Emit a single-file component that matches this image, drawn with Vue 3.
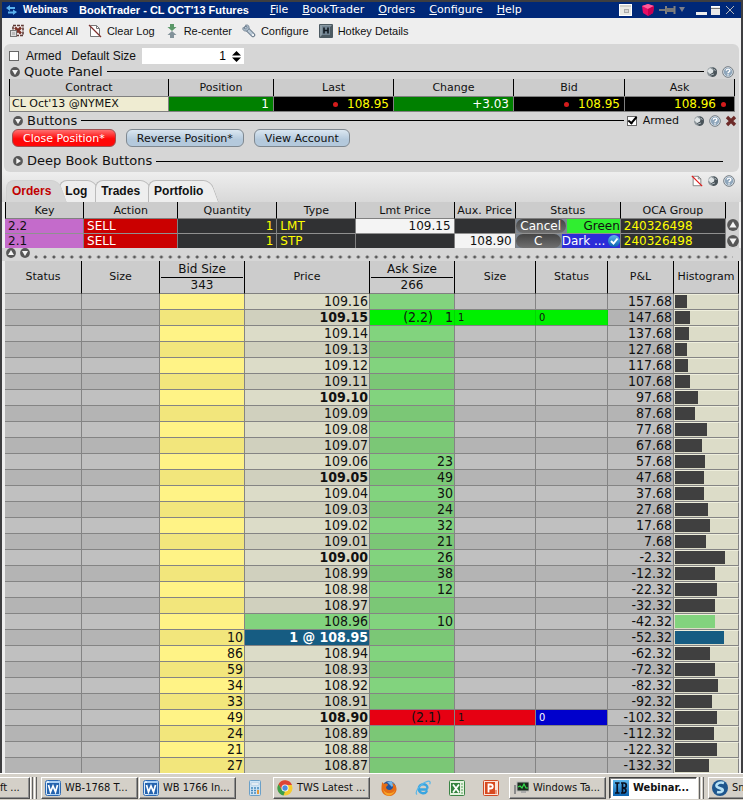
<script setup>
import { ref } from 'vue'

const armed = ref(false)
const buttonsArmed = ref(true)
const defaultSize = ref('1')

const menus = ['File', 'BookTrader', 'Orders', 'Configure', 'Help']
const tabs = ['Orders', 'Log', 'Trades', 'Portfolio']
const activeTab = ref('Orders')

const orders = [
  { key: '2.2', action: 'SELL', qty: 1, type: 'LMT', lmt: '109.15', aux: '', cancel: 'Cancel', state: 'Green', tone: 'working', oca: '240326498' },
  { key: '2.1', action: 'SELL', qty: 1, type: 'STP', lmt: '', aux: '108.90', cancel: 'C', state: 'Dark ...', tone: 'held', oca: '240326498' }
]

const bars = [12, 15, 14, 12, 13, 15, 23, 20, 32, 27, 30, 29, 29, 33, 35, 31, 50, 40, 42, 40, 40, 49, 35, 40, 43, 37, 42, 39, 42, 34]
const askSizes = { 10: 23, 11: 49, 12: 30, 13: 24, 14: 32, 15: 21, 16: 26, 17: 38, 18: 12, 20: 10 }
const bidSizes = { 21: 10, 22: 86, 23: 59, 24: 34, 25: 33, 26: 49, 27: 24, 28: 21, 29: 27 }
const marks = {
  1: { tone: 'limit', tag: '(2.2)', ask: '1', size: '1', status: '0' },
  26: { tone: 'stop', tag: '(2.1)', ask: '', size: '1', status: '0' }
}

const ladder = bars.map((bar, i) => {
  const cents = 10916 - i
  const price = (cents / 100).toFixed(2)
  return {
    price: i === 21 ? '1 @ ' + price : price,
    bold: cents % 5 === 0,
    level: i === 20 ? 'best-ask' : i === 21 ? 'last' : '',
    bid: bidSizes[i] ?? '',
    ask: askSizes[i] ?? '',
    pnl: (157.68 - i * 10).toFixed(2),
    bar: (bar / 63) * 100,
    mark: marks[i]
  }
})
</script>

<template>
  <div class="desktop">
    <svg class="defs" aria-hidden="true">
      <defs>
        <linearGradient id="sky" x1="0" y1="0" x2="0" y2="1"><stop offset="0" stop-color="#5fb8ec" /><stop offset="1" stop-color="#0a62b0" /></linearGradient>
        <symbol id="wrench" viewBox="0 0 12 12">
          <circle cx="6" cy="6" r="5" fill="#8b9499" />
          <path d="M1 5l3-3 3 2v3L4 8z" fill="#dfe4e6" />
          <path d="M6 1.500c2 1 2.500 3 1 5l-3 2 2 2.500c4 0 5-3 5-5 0-3-2-4.500-5-4.500z" fill="#4a545a" />
          <path d="M8 3l1.500 2M5 9l3-1" stroke="#aab4ba" stroke-width="1" />
        </symbol>
        <symbol id="help" viewBox="0 0 12 12">
          <circle cx="6" cy="6" r="5.300" fill="#e6edf3" stroke="#707980" />
          <circle cx="6" cy="6" r="4.200" fill="#8fa6bb" />
          <path d="M4.300 4.700c.2-2.200 3.600-2 3.500 0C7.700 6 6 5.800 6 7.200M6 8.200v1.200" fill="none" stroke="#fff" stroke-width="1.400" />
        </symbol>
        <symbol id="round-down" viewBox="0 0 10 10"><circle cx="5" cy="5" r="4.900" fill="#575757" /><path d="M2 3h6L5 8z" fill="#f4f4f4" /></symbol>
        <symbol id="round-right" viewBox="0 0 10 10"><circle cx="5" cy="5" r="4.900" fill="#575757" /><path d="M3.300 2v6l4.700-3z" fill="#f4f4f4" /></symbol>
        <symbol id="round-up" viewBox="0 0 10 10"><circle cx="5" cy="5" r="4.900" fill="#575757" /><path d="M2 7h6L5 2z" fill="#f4f4f4" /></symbol>
        <symbol id="clear-page" viewBox="0 0 12 14"><path d="M1.500 1.500h6l3 3v8h-9z" fill="#fff" stroke="#777" /><path d="M7.500 1.500v3h3" fill="none" stroke="#777" /></symbol>
        <symbol id="word" viewBox="0 0 16 16">
          <rect x=".5" y=".5" width="15" height="15" rx="2" fill="#dcecfb" stroke="#2d69b3" />
          <path d="M4 1h11v14H5z" fill="#a9cff5" /><rect x="2" y="3" width="12" height="11" fill="#2563ae" />
          <path d="M3.500 5l2 7L8 6l2.500 6 2-7" fill="none" stroke="#fff" stroke-width="1.700" />
        </symbol>
      </defs>
    </svg>

    <main class="window">
      <header class="titlebar">
        <svg class="app-icon" viewBox="0 0 11 11"><path d="M0 3l4-3v2h5v2H4v2zM11 7L7 10V8.500H2v-2h5V4.500z" fill="#5bb2ee" /></svg>
        <span class="group-name">Webinars</span>
        <h1>BookTrader - CL OCT'13 Futures</h1>
        <nav class="menus">
          <button v-for="m in menus" :key="m" type="button"><u>{{ m[0] }}</u>{{ m.slice(1) }}</button>
        </nav>
        <div class="window-tools">
          <svg width="13" height="12" viewBox="0 0 13 12"><rect x=".5" y=".5" width="12" height="11" fill="#e9e9e4" stroke="#fff" /><path d="M1 2h11" stroke="#b6b6b0" /><rect x="5" y="5" width="5" height="4" fill="#aaa" /><path d="M6 7h3" stroke="#fff" /></svg>
          <svg width="12" height="12" viewBox="0 0 12 12"><path d="M0 2l6-2 6 2-1 7-5 3-5-3z" fill="#e80d65" /><path d="M0 2l6-2 6 2-6 3z" fill="#ff5c9b" /><path d="M6 5v7l5-3 1-7z" fill="#c60050" /></svg>
          <svg width="27" height="10" viewBox="0 0 27 10"><path d="M0 5h7" stroke="#777" stroke-width="2" /><path d="M7 1v8M15.500 1v8" stroke="#808080" stroke-width="2" /><path d="M7 3h8v4H7z" fill="#777" /><path d="M20 2h6l-3 5z" fill="#7b7f8c" /></svg>
          <svg class="controls" width="39" height="11" viewBox="0 0 39 11"><path d="M0 7h11v3H0z" fill="#eee" /><path d="M15 1h9v9h-9z" fill="#e8e8e8" /><path d="M15 1.500h9" stroke="#fff" /><path d="M15 3.500h9" stroke="#777" /><path d="M30 1l8 8M38 1l-8 8" stroke="#b8b8b8" stroke-width="1" /></svg>
        </div>
      </header>

      <div class="toolbar">
        <button type="button">
          <svg width="14" height="14" viewBox="0 0 14 14"><path d="M3 1.500h10v10H3z" fill="#f4eeee" stroke="#5d3a35" stroke-width="1.600" stroke-dasharray="3 1" /><path d="M5 3.500l6 6M11 3.500l-6 6" stroke="#7c3328" stroke-width="2.600" /><rect x=".5" y="6.500" width="6" height="6" fill="#ddd" stroke="#777" /><path d="M2 8h3v3H2z" fill="#bbb" /></svg>
          Cancel All
        </button>
        <button type="button">
          <svg width="14" height="14" viewBox="-1 0 14 14"><use href="#clear-page" width="12" height="14" /><path d="M0 1l12 12" stroke="#7f2f2c" stroke-width="1.300" /></svg>
          Clear Log
        </button>
        <button type="button">
          <svg width="14" height="14" viewBox="-2 0 14 14"><path d="M3 0h4v3h2.500L5 7 .5 3H3z" fill="#5b9868" /><path d="M3 14h4v-3h2.500L5 7l-4.500 4H3z" fill="#82929a" /></svg>
          Re-center
        </button>
        <button type="button">
          <svg width="14" height="14" viewBox="0 0 14 14"><path d="M4 4l7 7" stroke="#667787" stroke-width="4.500" stroke-linecap="round" /><path d="M4 4l7 7" stroke="#b9c8d5" stroke-width="2.500" stroke-linecap="round" /><path d="M1 3.500L3.500 5 5 3.500 3.500 1c3-.5 4 1 3.500 4L5 7C2 7.500 0 6 1 3.500z" fill="#a7b8c7" stroke="#718291" stroke-width=".8" /><circle cx="11" cy="11" r="1" fill="#fff" /></svg>
          Configure
        </button>
        <button type="button">
          <svg width="14" height="14" viewBox="0 0 14 14"><rect width="14" height="14" rx="1" fill="#4c5a62" /><path d="M1 1h12l-2 2H3v8l-2 2z" fill="#8a9aa3" /><rect x="3" y="2" width="8" height="9" fill="#718391" /><path d="M5 3.500v6M9 3.500v6M5 6.500h4" stroke="#101820" stroke-width="1.600" /></svg>
          Hotkey Details
        </button>
      </div>

      <section class="panel">
        <div class="defaults">
          <label class="check"><input v-model="armed" type="checkbox" />Armed</label>
          <label for="default-size">Default Size</label>
          <span class="spinner">
            <input id="default-size" v-model="defaultSize" type="text" inputmode="numeric" />
            <button type="button" aria-label="Change size"><svg width="9" height="11" viewBox="0 0 9 11"><path d="M0 4.500L4.500 0 9 4.500zM0 6.500h9L4.500 11z" fill="#000" /></svg></button>
          </span>
        </div>

        <div class="rule quote-rule">
          <svg class="round"><use href="#round-down" /></svg><h2>Quote Panel</h2><i class="line"></i>
          <span class="icons"><svg class="ico"><use href="#wrench" /></svg><svg class="ico"><use href="#help" /></svg></span>
        </div>

        <table class="quotes">
          <colgroup><col class="q-contract" /><col class="q-pos" /><col class="q-last" /><col class="q-change" /><col class="q-bid" /><col class="q-ask" /></colgroup>
          <thead><tr><th>Contract</th><th>Position</th><th>Last</th><th>Change</th><th>Bid</th><th>Ask</th></tr></thead>
          <tbody>
            <tr>
              <td class="contract">CL Oct'13 @NYMEX</td>
              <td class="up">1</td>
              <td><i class="dot before"></i>108.95</td>
              <td class="up">+3.03</td>
              <td><i class="dot before"></i>108.95</td>
              <td>108.96<i class="dot after"></i></td>
            </tr>
          </tbody>
        </table>

        <div class="rule buttons-rule">
          <svg class="round"><use href="#round-down" /></svg><h2>Buttons</h2><i class="line"></i>
          <label class="check small"><input v-model="buttonsArmed" type="checkbox" />Armed</label>
          <span class="icons tail">
            <svg class="ico"><use href="#wrench" /></svg><svg class="ico"><use href="#help" /></svg>
            <svg class="ico" viewBox="0 0 12 12"><path d="M2 2l8 8M10 2l-8 8" stroke="#6d2a28" stroke-width="3.200" /></svg>
          </span>
        </div>

        <div class="actions">
          <button type="button" class="close">Close Position*</button>
          <button type="button">Reverse Position*</button>
          <button type="button">View Account</button>
        </div>

        <div class="rule deep-rule">
          <svg class="round"><use href="#round-right" /></svg><h2>Deep Book Buttons</h2><i class="line"></i>
        </div>
      </section>

      <div class="tabbar">
        <div class="tabs">
          <button v-for="t in tabs" :key="t" type="button" :class="{ active: t === activeTab }" @click="activeTab = t"><span>{{ t }}</span></button>
        </div>
        <span class="icons">
          <svg class="ico" viewBox="0 0 12 14"><use href="#clear-page" width="12" height="14" /><path d="M0 1l12 12" stroke="#e01818" stroke-width="1.500" /></svg>
          <svg class="ico"><use href="#wrench" /></svg><svg class="ico"><use href="#help" /></svg>
        </span>
      </div>

      <div class="orders-area">
        <table class="orders">
          <colgroup><col class="o-key" /><col class="o-action" /><col class="o-qty" /><col class="o-type" /><col class="o-lmt" /><col class="o-aux" /><col class="o-status" /><col class="o-oca" /></colgroup>
          <thead><tr><th>Key</th><th>Action</th><th>Quantity</th><th>Type</th><th>Lmt Price</th><th>Aux. Price</th><th>Status</th><th>OCA Group</th></tr></thead>
          <tbody>
            <tr v-for="o in orders" :key="o.key">
              <td class="key">{{ o.key }}</td>
              <td class="sell">{{ o.action }}</td>
              <td class="num">{{ o.qty }}</td>
              <td>{{ o.type }}</td>
              <td class="num" :class="{ field: o.lmt }">{{ o.lmt }}</td>
              <td class="num" :class="{ field: o.aux }">{{ o.aux }}</td>
              <td class="status" :class="o.tone">
                <div class="status-row">
                  <button type="button">{{ o.cancel }}</button>
                  <span class="state">{{ o.state }}</span>
                  <svg v-if="o.tone === 'held'" class="tick" viewBox="0 0 12 12"><circle cx="6" cy="6" r="6" fill="url(#sky)" /><path d="M3 6l2.500 2.500L9.500 3.500" fill="none" stroke="#fff" stroke-width="2" /></svg>
                </div>
              </td>
              <td>{{ o.oca }}</td>
            </tr>
          </tbody>
        </table>
        <div class="scroller"><svg><use href="#round-up" /></svg><svg><use href="#round-down" /></svg></div>
      </div>

      <div class="splitter">
        <svg class="round"><use href="#round-up" /></svg><svg class="round"><use href="#round-down" /></svg><i class="dots"></i>
      </div>

      <table class="ladder">
        <colgroup><col class="l-status" /><col class="l-size" /><col class="l-book" /><col class="l-price" /><col class="l-book" /><col class="l-asize" /><col class="l-astatus" /><col class="l-pnl" /><col class="l-hist" /></colgroup>
        <thead>
          <tr>
            <th>Status</th><th>Size</th>
            <th class="stack"><span>Bid Size</span><span>343</span></th>
            <th>Price</th>
            <th class="stack"><span>Ask Size</span><span>266</span></th>
            <th>Size</th><th>Status</th><th>P&amp;L</th><th>Histogram</th>
          </tr>
        </thead>
        <tbody>
          <tr v-for="r in ladder" :key="r.pnl" :class="r.mark && r.mark.tone">
            <td></td><td></td>
            <td class="bid">{{ r.bid }}</td>
            <td class="price" :class="[r.level, { bold: r.bold }]">{{ r.price }}</td>
            <td class="ask"><span v-if="r.mark" class="tag">{{ r.mark.tag }}</span>{{ r.mark ? r.mark.ask : r.ask }}</td>
            <td class="note m-size">{{ r.mark && r.mark.size }}</td>
            <td class="note m-status">{{ r.mark && r.mark.status }}</td>
            <td>{{ r.pnl }}</td>
            <td class="hist"><div class="bar" :class="r.level" :style="{ width: r.bar + '%' }"></div></td>
          </tr>
        </tbody>
      </table>
    </main>

    <footer class="taskbar">
      <button type="button" class="task first">ft ...</button>
      <i class="grip"></i>
      <button type="button" class="task wide"><svg class="tico"><use href="#word" /></svg>WB-1768 T...</button>
      <button type="button" class="task wide"><svg class="tico"><use href="#word" /></svg>WB 1766 In...</button>
      <span class="launch">
        <svg class="tico" viewBox="0 0 16 16"><rect x="2.500" y=".5" width="11" height="15" rx="1" fill="#cfe4f4" stroke="#6ba0c8" /><path d="M4 3h8v2H4z" fill="#fff" stroke="#8fb2cc" stroke-width=".5" /><path d="M4 8h8M4 10.500h8M4 13h8" stroke="#4689bd" stroke-width="1.500" stroke-dasharray="2 1" /><path d="M10 10h2v4h-2z" fill="#e59a3c" /></svg>
      </span>
      <button type="button" class="task wide"><svg class="tico" viewBox="0 0 16 16"><circle cx="8" cy="8" r="7.500" fill="#f6cb2e" /><path d="M1.500 4.200A7.500 7.500 0 0 1 15 5H8L5 10z" fill="#dc4437" /><path d="M1.500 4.200L5 10l3 1.500-1.500 4A7.500 7.500 0 0 1 1.500 4.200z" fill="#3c9e4a" /><circle cx="8" cy="8" r="3.500" fill="#fff" /><circle cx="8" cy="8" r="2.700" fill="#4a8be0" /></svg>TWS Latest ...</button>
      <span class="launch quick">
        <svg class="tico" viewBox="0 0 16 16"><circle cx="8" cy="8" r="7" fill="#24549c" /><path d="M6 2l4-1 3 3-2 3z" fill="#72b7e8" /><path d="M1 2l2 2c2-1 4 0 4 1L5 7c0 3 4 4 6 2 2-2 1-4 0-6 3 1 5 4 4.500 7-1 4-4 6-7.500 6-5 0-8-4-7.500-8C.6 5 1 4 1 2z" fill="#e56d16" /><path d="M2 9c2 5 9 6 12 1-1 4-4 5.500-6 5.500S3 14 2 9z" fill="#f6a629" /></svg>
        <svg class="tico" viewBox="0 0 16 16"><path d="M12.700 9.500H4.200M12.500 8.500c0-6-8.700-5.500-8.700 0 0 5.300 6.300 6 8.300 2.500" fill="none" stroke="#39a5e0" stroke-width="2.400" /><path d="M2 14.500C-1 12 6 3 12.500 1.300c3-.6 3 1.200 2.200 3" fill="none" stroke="#58b7e9" stroke-width="1.200" /></svg>
        <svg class="tico" viewBox="0 0 16 16"><rect x=".5" y=".5" width="15" height="15" rx="1" fill="#e4f2df" stroke="#3b8445" /><path d="M2 3h9v10H2z" fill="#34833e" /><path d="M4 4.500l6 8M10 4.500l-6 8" stroke="#fff" stroke-width="1.800" /><path d="M12 4h2M12 7h2M12 10h2M12 13h2" stroke="#58a35c" /></svg>
        <svg class="tico" viewBox="0 0 16 16"><rect x=".5" y=".5" width="15" height="15" rx="1" fill="#fbe3da" stroke="#cf4a24" /><path d="M2 2h10v12H2z" fill="#d8491f" /><path d="M5.500 12.500v-8h2c3 0 3 4 0 4h-2" fill="none" stroke="#fff" stroke-width="1.800" /><path d="M12 11h2M12 13h2" stroke="#d8491f" /></svg>
      </span>
      <button type="button" class="task wide"><svg class="tico" viewBox="0 0 16 16"><rect x="4" y="2" width="12" height="9" fill="#1b2b1e" stroke="#b5b5b5" /><path d="M5 7l2-1 2 2 2-4 2 4h2" fill="none" stroke="#36e04e" stroke-width="1.200" /><path d="M8 11h5v2H8z" fill="#aaa" /><path d="M1 5h2v9H1z" fill="#8b8b8b" /></svg>Windows Ta...</button>
      <button type="button" class="task current"><svg class="tico" viewBox="0 0 16 16"><rect width="16" height="16" fill="url(#sky)" /><path d="M2 3h4.500M2 13h4.500M4.200 3v10M8 3h3c3 0 3 4.800 0 4.800h-2c5-.3 5 5.200 1.500 5.200H8M9.500 3v10" fill="none" stroke="#081020" stroke-width="1.700" /></svg>Webinar...</button>
      <i class="grip"></i>
      <button type="button" class="task last"><svg class="tico" viewBox="0 0 16 16"><circle cx="8" cy="8" r="8" fill="#1e568e" /><path d="M12 3C6 1 2 6 6 7.500l4 1.500c2 1 0 4-5 3" fill="none" stroke="#b8e2f6" stroke-width="2.600" /></svg>Sn</button>
    </footer>
  </div>
</template>

<style>
body { background: #d4d0c8; }
</style>

<style scoped>
.desktop {
  --ui: "DejaVu Sans", Verdana, sans-serif;
  --narrow: "DejaVu Sans Condensed", "DejaVu Sans", Tahoma, sans-serif;
  --arial: "Liberation Sans", Arial, sans-serif;
  font: 11px/16px var(--ui);
  color: #111;
  overflow: hidden;
}
.desktop *, .desktop *::before, .desktop *::after { box-sizing: border-box; }
button { font: inherit; color: inherit; border: 0; background: none; padding: 0; margin: 0; white-space: nowrap; }
input { margin: 0; font: inherit; }
svg { display: block; flex: none; }
h1, h2 { margin: 0; white-space: nowrap; }
.defs { position: absolute; width: 0; height: 0; }
.window { background: #eee; border: 2px solid #3e3e40; border-bottom: 0; }

.titlebar { display: flex; align-items: center; height: 16px; background: #002878; color: #fff; padding: 0 6px 0 4px; }
.app-icon { width: 11px; height: 11px; }
.group-name { font: bold 10px/16px var(--arial); padding-left: 6px; width: 62px; }
h1 { font: bold 11px/16px var(--arial); }
.menus { display: flex; gap: 14px; padding-left: 21px; flex: 1; }
.window-tools { display: flex; align-items: center; gap: 10px; }
.window-tools svg:nth-child(3) { margin-left: -5px; }

.toolbar { display: flex; align-items: center; gap: 10px; height: 26px; padding: 0 8px; font: 11px/14px var(--arial); }
.toolbar button { display: flex; align-items: center; gap: 5px; }

.panel { background: #d6d6d6; border-radius: 6px; margin: 0 2px; height: 128px; padding-top: 4px; }
.defaults { display: flex; align-items: center; height: 16px; padding-left: 5px; font: 12px/16px var(--arial); }
.defaults > label { margin-right: 10px; }
.defaults > label:nth-child(2) { margin-right: 6px; }
.check { display: flex; align-items: center; gap: 7px; }
.check input { appearance: none; width: 10px; height: 10px; border: 1px solid #666; background: #fff; position: relative; }
.check input:checked::after { content: ""; position: absolute; left: 2px; top: -2px; width: 5px; height: 9px; border: solid #000; border-width: 0 2px 2px 0; transform: rotate(40deg); }
.spinner { display: flex; align-items: center; background: #fff; width: 102px; height: 16px; padding-right: 3px; }
.spinner input { flex: 1; min-width: 0; border: 0; background: none; padding: 0; text-align: right; height: 16px; }
.spinner button { margin-left: 6px; }

.rule { display: flex; align-items: center; }
.rule h2 { font: 13px/16px var(--ui); padding: 0 4px; }
.round { width: 10px; height: 10px; }
.line { flex: 1; height: 1px; background: #000; }
.icons { display: flex; align-items: center; gap: 4px; }
.ico { width: 12px; height: 12px; }
.quote-rule { height: 15px; padding: 0 5px 0 6px; }
.quote-rule .icons { padding-left: 2px; }
.buttons-rule { height: 17px; padding: 0 2px 0 9px; }
.buttons-rule .check { margin-left: 3px; gap: 6px; }
.buttons-rule .tail { margin-left: 14px; gap: 4px; }
.deep-rule { height: 28px; padding: 0 16px 0 9px; }

table { border-collapse: separate; border-spacing: 0; table-layout: fixed; width: 100%; }
th, td { padding: 0; overflow: hidden; white-space: nowrap; }
th { font-weight: normal; background: #ccc; border-right: 1px solid #000; text-align: center; }

.quotes { width: auto; margin: 0 4px 0 5px; min-width: calc(100% - 9px); }
.quotes th { height: 16px; line-height: 16px; padding-top: 1px; }
.quotes th:first-child { border-left: 1px solid #000; }
.quotes td { height: 16px; font-size: 12px; line-height: 14px; background: #000; color: #ff0; text-align: right; padding-right: 4px; border: 1px solid #808080; border-left: 0; }
.quotes .contract { background: #efecd2; color: #111; text-align: left; font-size: 11px; padding-left: 2px; border-left: 1px solid #808080; }
.quotes .up { background: #008000; color: #fff; }
.dot { display: inline-block; width: 5px; height: 5px; border-radius: 50%; background: #d41c1c; vertical-align: 1px; }
.before { margin-right: 9px; }
.after { margin: 0 4px 0 5px; }
.q-contract { width: 160px; } .q-pos { width: 105px; } .q-last { width: 120px; } .q-change { width: 120px; } .q-bid { width: 111px; } .q-ask { width: 110px; }

.actions { display: flex; gap: 10px; padding-left: 8px; }
.actions button { height: 18px; line-height: 15px; padding: 0 10px; border: 1px solid #7f8890; border-radius: 6px; background: linear-gradient(#dbe7f1, #b4c9dc 60%); }
.actions .close { color: #fff; border-color: #a05050; background: linear-gradient(#ff7070, #ff0808 55%); }

.tabbar { display: flex; justify-content: space-between; height: 30px; padding: 0 6px 0 4px; background: linear-gradient(#eee, #d8d8d8); }
.tabbar > .icons { height: 17px; }
.tabs { display: flex; align-items: flex-end; isolation: isolate; font: bold 12px/22px var(--arial); }
.tabs button { position: relative; height: 22px; padding: 0 8px 0 6px; }
.tabs button::before, .tabs button::after { content: ""; position: absolute; top: 0; bottom: 0; background: #eee; border-top: 1px solid #bbb; }
.tabs button::before { left: 0; right: 12px; border-left: 1px solid #bbb; border-radius: 8px 0 0 0; }
.tabs button::after { right: 0; width: 20px; border-right: 1px solid #bbb; border-radius: 0 8px 0 0; transform: skewX(20deg); transform-origin: 0 0; }
.tabs span { position: relative; z-index: 1; }
.tabs .active { color: #c00000; z-index: 2; }
.tabs .active::before, .tabs .active::after { background: #d6d6d6; border-color: #d0d0d0; }

.orders-area { display: flex; margin: 0 2px 0 3px; background: #ccc; }
.orders { flex: 1; width: 0; }
.orders th { height: 17px; line-height: 14px; padding-top: 2px; border-bottom: 1px solid #808080; }
.orders th:first-child { border-left: 1px solid #000; }
.orders td { height: 14px; font-size: 12px; line-height: 14px; background: #303133; color: #ff0; padding: 0 3px; border-right: 1px solid #808080; }
.orders tr:first-child td { height: 15px; border-bottom: 1px solid #909090; }
.orders .num { text-align: right; }
.orders .key { background: #c46bcb; color: #111; }
.orders .sell { background: #cb0000; color: #fff; }
.orders .field { background: #f4f4f4; color: #111; }
.orders .status { padding: 0; }
.status-row { display: flex; height: 14px; position: relative; background: #7c8692; }
.status-row button { flex: 0 0 50px; color: #fff; line-height: 14px; background: linear-gradient(#444, #707070); border-radius: 7px; overflow: hidden; }
.state { flex: 1; text-align: right; margin-left: 1px; }
.working .state { background: #30ee30; color: #111; }
.held button { flex-basis: 45px; }
.held .state { background: #2c2cd8; color: #fff; text-align: left; }
.tick { position: absolute; right: 0; top: 1px; width: 12px; height: 12px; }
.scroller { width: 13px; display: flex; flex-direction: column; align-items: center; gap: 4px; padding-top: 17px; background: #d0d0d0; }
.scroller svg { width: 12px; height: 12px; }
.o-key { width: 79px; } .o-action { width: 94px; } .o-qty { width: 99px; } .o-type { width: 79px; } .o-lmt { width: 98px; } .o-aux { width: 61px; } .o-status { width: 105px; } .o-oca { width: 105px; }

.splitter { display: flex; align-items: flex-start; gap: 4px; height: 13px; padding: 0 8px 0 4px; background: #d6d6d6; }
.dots { flex: 1; height: 4px; margin-top: 7px; background: radial-gradient(circle at 2px 2px, #5a5a5a 1px, transparent 2px) 0 0 / 9px 4px round; }

.ladder { width: auto; min-width: calc(100% - 5px); margin: 0 2px 0 3px; }
.ladder th { height: 33px; border-bottom: 1px solid #808080; }
.stack span { display: block; font-size: 12px; line-height: 15px; }
.stack span:first-child { border-bottom: 1px solid #000; margin: 0 1px; }
.ladder td { height: 16px; font: 14px/15px var(--narrow); text-align: right; padding-right: 1px; background: #c0c0c0; border: solid #848484; border-width: 0 1px 1px 0; }
.ladder tbody tr:last-child td { height: 15px; border-bottom: 0; }
.ladder tbody tr:nth-child(even) td { background: #b4b4b4; }
.ladder tbody tr td.bid { background: #fff386; }
.ladder tbody tr:nth-child(even) td.bid { background: #f2e67c; }
.ladder tbody tr td.price { background: #dcdcc8; }
.ladder tbody tr:nth-child(even) td.price { background: #d0d0be; }
.ladder tbody tr td.ask { background: #82d37e; }
.ladder tbody tr:nth-child(even) td.ask { background: #7bc776; }
.ladder tbody tr td.best-ask { background: #82d37e; }
.ladder tbody tr:nth-child(even) td.last { background: #165c82; color: #fff; font-weight: bold; }
.ladder td.bold { font-weight: bold; }
.ladder td.note { font-size: 11px; text-align: left; padding-left: 3px; }
.tag { margin-right: 12px; }
.ladder tbody tr.limit td.ask, .ladder tbody tr.limit td.note { background: #00f000; border-right-color: #00d800; }
.ladder tbody tr.stop td.ask, .ladder tbody tr.stop td.m-size { background: #e60012; }
.ladder tbody tr.stop td.m-status { background: #0000cc; color: #fff; }
.ladder tbody tr td.hist, .ladder tbody tr:nth-child(even) td.hist { background: #dcdcc8; padding: 0 0 0 1px; border-top: 1px solid #eeeedc; vertical-align: top; }
.bar { height: 13px; background: #404040; }
.bar.best-ask { background: #82d37e; }
.bar.last { background: #165c82; }
.l-status { width: 77px; } .l-size { width: 78px; } .l-book { width: 85px; } .l-price { width: 125px; } .l-asize { width: 81px; } .l-astatus { width: 72px; } .l-pnl { width: 66px; } .l-hist { width: 65px; }

.taskbar { display: flex; align-items: center; height: 27px; padding-top: 1px; border-top: 1px solid #fff; background: #d4d0c8; font: 11px/18px var(--narrow); white-space: nowrap; overflow: hidden; }
.task { display: flex; align-items: center; gap: 4px; height: 22px; border: 1px solid; border-color: #fff #505050 #505050 #fff; box-shadow: inset -1px -1px #909090; padding: 0 3px; overflow: hidden; flex: none; }
.wide { width: 97px; margin-right: 1px; }
.first { width: 30px; padding: 0; border-left: 0; }
.last { width: 40px; }
.current { width: 88px; margin-left: 2px; background: #fff; font-weight: bold; border-color: #404040 #fff #fff #404040; box-shadow: inset 1px 1px #808080; }
.tico { width: 16px; height: 16px; }
.grip { flex: none; width: 8px; height: 22px; margin: 0 3px 0 0; background: repeating-linear-gradient(90deg, #fff 0 1px, #d4d0c8 1px 2px, #606060 2px 3px, #d4d0c8 3px 4px); }
.launch { display: flex; flex: none; gap: 18px; padding: 0 10px; }
</style>
